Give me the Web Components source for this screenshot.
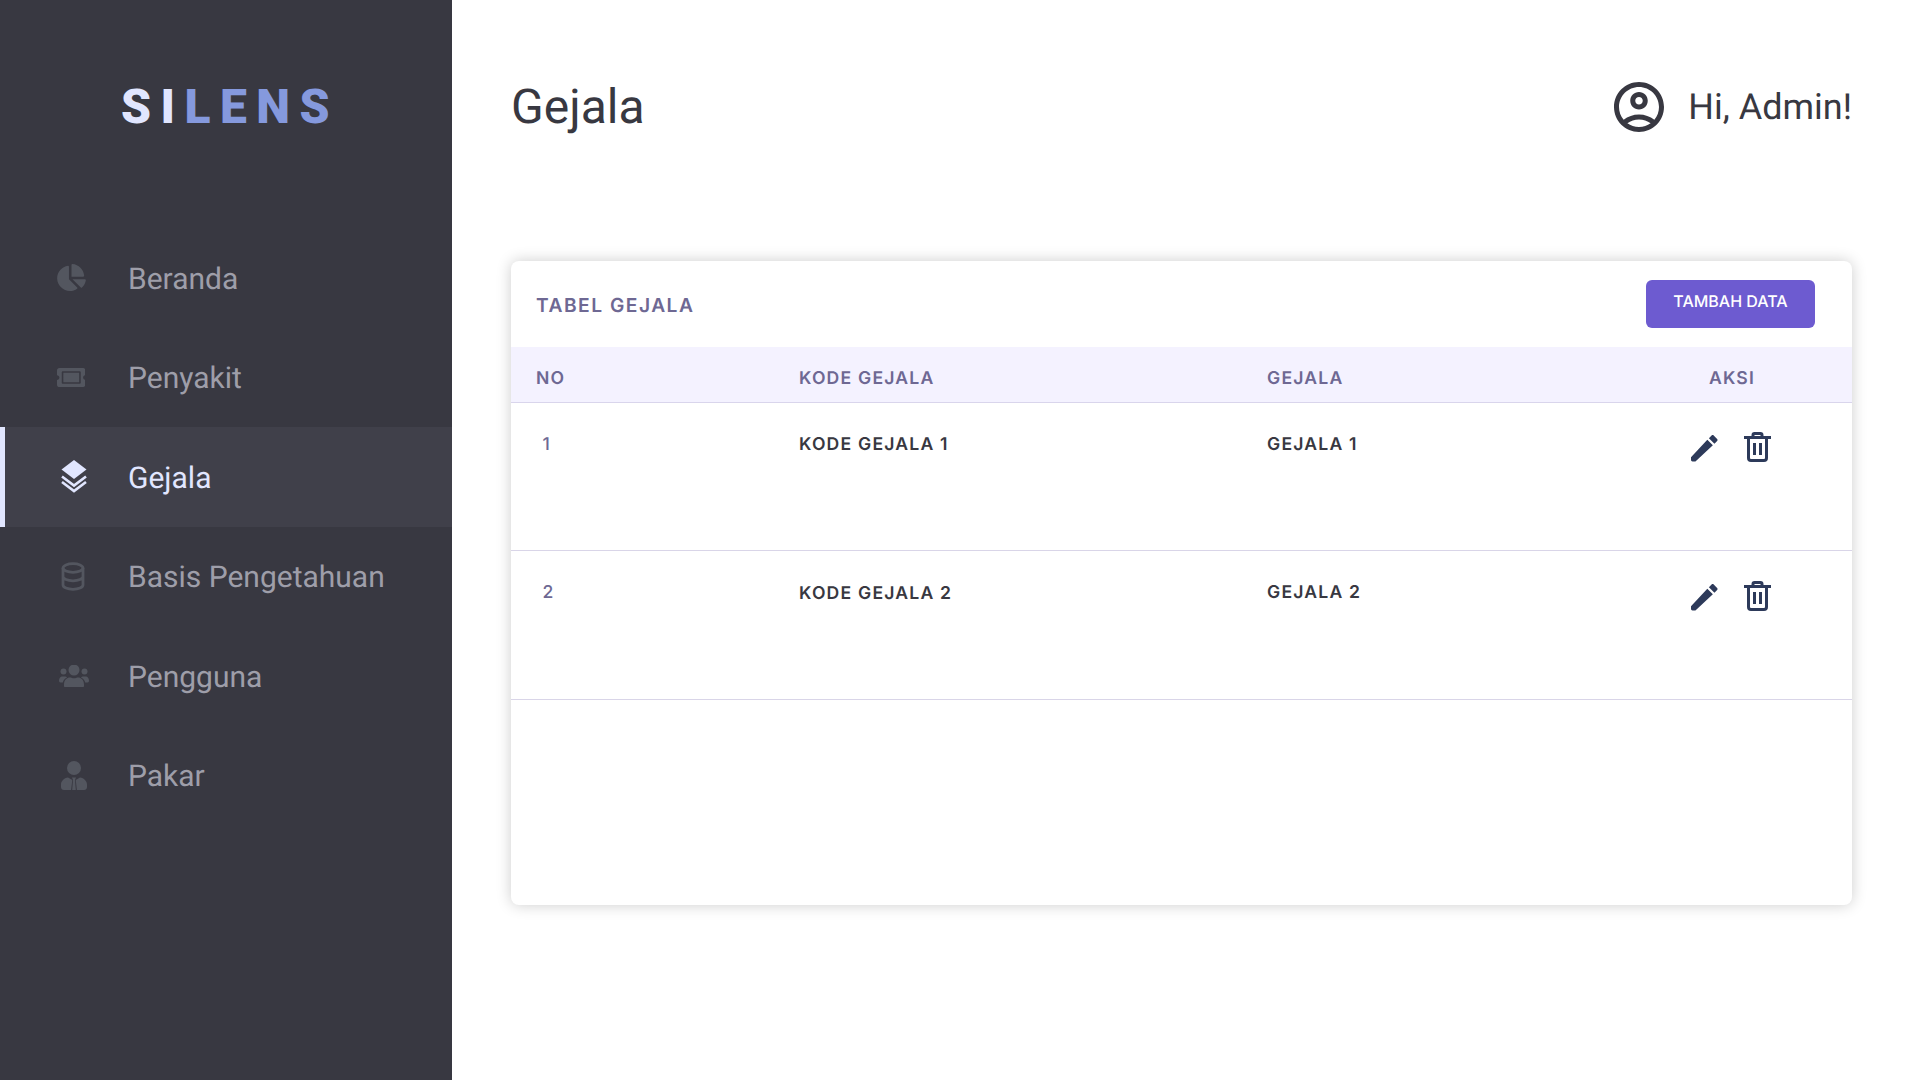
<!DOCTYPE html>
<html lang="id">
<head>
<meta charset="utf-8">
<title>Gejala</title>
<style>
html,body{margin:0;height:100%;background:#fff}
body{font-family:Roboto,sans-serif;text-rendering:geometricPrecision}
</style>
</head>
<body>
<app-shell>
  <side-bar slot="side">
    <nav-item label="Beranda" icon="pie"></nav-item>
    <nav-item label="Penyakit" icon="ticket"></nav-item>
    <nav-item label="Gejala" icon="layers" active></nav-item>
    <nav-item label="Basis Pengetahuan" icon="db"></nav-item>
    <nav-item label="Pengguna" icon="users"></nav-item>
    <nav-item label="Pakar" icon="tie"></nav-item>
  </side-bar>
  <top-bar title-text="Gejala" user="Hi, Admin!"></top-bar>
  <data-card heading="TABEL GEJALA" action="TAMBAH DATA">
    <data-row no="1" code="KODE GEJALA 1" name="GEJALA 1" style="height:148px"></data-row>
    <data-row no="2" code="KODE GEJALA 2" name="GEJALA 2" style="--code-top:1px;--icon-top:-1px"></data-row>
  </data-card>
</app-shell>
<script>
const ICONS={
pie:'<svg style="margin-left:-6px" viewBox="0 0 544 512" width="29" height="27"><path fill="currentColor" d="M527.79 288H290.5l158.03 158.03c6.04 6.04 15.98 6.53 22.19.68 38.7-36.46 65.32-85.61 73.13-140.86 1.34-9.46-6.51-17.85-16.06-17.85zm-15.83-64.8C503.72 103.74 408.26 8.28 288.8.04 279.68-.59 272 7.1 272 16.24V240h223.77c9.14 0 16.82-7.68 16.19-16.8zM224 288V50.71c0-9.55-8.39-17.4-17.84-16.06C86.99 51.49-4.1 155.6.14 280.37 4.5 408.51 114.83 513.59 243.03 511.98c50.4-.63 96.97-16.87 135.26-44.03 7.9-5.6 8.42-17.23 1.57-24.08L224 288z"/></svg>',
ticket:'<svg style="margin-left:-6px" viewBox="0 64 576 384" width="28.500" height="19"><path fill="currentColor" fill-rule="evenodd" d="M128 160h320v192H128V160zm400 96c0 26.51 21.49 48 48 48v96c0 26.51-21.49 48-48 48H48c-26.51 0-48-21.49-48-48v-96c26.51 0 48-21.49 48-48s-21.49-48-48-48v-96c0-26.51 21.49-48 48-48h480c26.51 0 48 21.49 48 48v96c-26.51 0-48 21.49-48 48zm-48-104c0-13.255-10.745-24-24-24H120c-13.255 0-24 10.745-24 24v208c0 13.255 10.745 24 24 24h336c13.255 0 24-10.745 24-24V152z"/></svg>',
layers:'<svg viewBox="0 0 26 33" width="26" height="33"><path fill="currentColor" d="M13 0 25.500 9.500 13 19 .5 9.500z"/><path fill="none" stroke="currentColor" stroke-width="2.600" stroke-linejoin="miter" d="M1 16.500 13 25.500 25 16.500M1 22 13 31 25 22"/></svg>',
db:'<svg style="margin-left:-3px" viewBox="0 0 24 29" width="24" height="29"><g fill="none" stroke="currentColor" stroke-width="2.800"><ellipse cx="12" cy="6" rx="10" ry="4.300"/><path d="M2 6v17c0 2.400 4.500 4.300 10 4.300S22 25.400 22 23V6M2 14.500c0 2.400 4.500 4.300 10 4.300s10-1.900 10-4.300"/></g></svg>',
users:'<svg viewBox="0 0 30 22" width="30" height="22"><g fill="currentColor"><circle cx="15" cy="5" r="5.500"/><circle cx="4.500" cy="6.500" r="3"/><circle cx="25.500" cy="6.500" r="3"/><path d="M6 22c-.6 0-1-.4-1-1v-1.500C5 15 8 12.500 11 12.500c1.300 0 2.600.8 4 .8s2.700-.8 4-.8c3 0 6 2.500 6 7V21c0 .6-.4 1-1 1z"/><path d="M0 15.500c0-2 1.500-4 3-4h3c.5 0 1.500.3 2 1-2.500 1-3.800 3-4.200 5H1.500C.5 17.500 0 16.800 0 15.500zM30 15.500c0-2-1.500-4-3-4h-3c-.5 0-1.500.3-2 1 2.500 1 3.800 3 4.200 5h2.300c1 0 1.500-.7 1.500-2z"/></g></svg>',
tie:'<svg viewBox="0 0 26 29" width="26" height="29"><g fill="currentColor"><circle cx="13" cy="7" r="7"/><path fill-rule="evenodd" d="M7 16.500 11.300 19l-1.200 10H3c-1.700 0-3-1.300-3-3v-2.500c0-3.300 3-6.500 7-7zM19 16.500c4 .5 7 3.700 7 7V26c0 1.700-1.300 3-3 3h-7.100l-1.200-10zM11 16.500h4l-1 2.500.8 10h-3.600l.8-10z"/></g></svg>'
};
const define=(name,cls)=>customElements.define(name,cls);

define('app-shell',class extends HTMLElement{constructor(){super();this.attachShadow({mode:'open'}).innerHTML=`<style>
:host{display:flex;width:100%;height:1080px;overflow:hidden}
main{flex:1;min-width:0;padding:0 68px 0 59px;display:flex;flex-direction:column}
</style><slot name="side"></slot><main><slot></slot></main>`}});

define('side-bar',class extends HTMLElement{constructor(){super();this.attachShadow({mode:'open'}).innerHTML=`<style>
:host{display:block;flex:none;width:452px;height:1080px;background:#383841;font-family:Roboto,sans-serif}
.logo{height:212px;box-sizing:border-box;display:flex;justify-content:center;align-items:center;font-size:48px;font-weight:900;letter-spacing:9.500px;line-height:1;color:#e1e6ff;padding:2px 0 0 8px}
.logo b{font-weight:900;color:#8599dd}
nav{display:flex;flex-direction:column;padding-top:16px}
</style><div class="logo"><div>SI<b>LENS</b></div></div><nav><slot></slot></nav>`}});

define('nav-item',class extends HTMLElement{connectedCallback(){
if(this.shadowRoot)return;
this.attachShadow({mode:'open'}).innerHTML=`<style>
:host{display:flex;align-items:center;height:99.500px;box-sizing:border-box;color:#9e9ea9;font-size:30px;font-family:Roboto,sans-serif;padding-left:57px}
:host([active]){background:#40404a;border-left:5px solid #e1e6ff;padding-left:52px;color:#e1e6ff}
.i{width:34px;height:34px;display:flex;align-items:center;justify-content:center;color:#53565f;margin-right:37px;flex:none}
:host([active]) .i{color:#e1e6ff}
.l{padding-top:3px}
</style><span class="i">${ICONS[this.getAttribute('icon')]}</span><span class="l">${this.getAttribute('label')}</span>`}});

define('top-bar',class extends HTMLElement{connectedCallback(){
if(this.shadowRoot)return;
this.attachShadow({mode:'open'}).innerHTML=`<style>
:host{display:flex;justify-content:space-between;align-items:center;height:212px;padding-top:2px;box-sizing:border-box;flex:none;color:#383841;font-family:Roboto,sans-serif}
h1{margin:0;font-weight:400;font-size:48px;line-height:1}
.u{display:flex;align-items:center;gap:19px;font-size:36px;line-height:1}
svg{display:block;width:60px;height:60px}
</style><h1>${this.getAttribute('title-text')}</h1><div class="u"><svg viewBox="0 0 24 24"><path fill="currentColor" fill-rule="evenodd" d="M12 2C6.480 2 2 6.480 2 12s4.480 10 10 10 10-4.480 10-10S17.520 2 12 2zM7.350 18.500C8.660 17.560 10.260 17 12 17s3.340.560 4.650 1.500C15.340 19.440 13.740 20 12 20s-3.340-.560-4.650-1.500zm10.790-1.380C16.450 15.800 14.320 15 12 15s-4.450.8-6.140 2.120C4.700 15.730 4 13.950 4 12c0-4.420 3.580-8 8-8s8 3.580 8 8c0 1.950-.7 3.730-1.860 5.120zM12 6c-1.930 0-3.500 1.570-3.500 3.500S10.070 13 12 13s3.500-1.570 3.500-3.500S13.930 6 12 6zm0 5c-.83 0-1.500-.67-1.500-1.500S11.170 8 12 8s1.500.67 1.500 1.500S12.830 11 12 11z"/></svg><span>${this.getAttribute('user')}</span></div>`}});

define('data-card',class extends HTMLElement{connectedCallback(){
if(this.shadowRoot)return;
this.attachShadow({mode:'open'}).innerHTML=`<style>
:host{display:block;margin-top:49px;height:644px;box-sizing:border-box;background:#fff;border-radius:8px;box-shadow:0 0 15px rgba(0,0,0,.2);overflow:hidden;font-family:Inter,sans-serif;flex:none}
.h{display:flex;justify-content:space-between;align-items:center;height:86px;padding:0 37px 0 25px;box-sizing:border-box}
.t{font-size:19.200px;font-weight:600;letter-spacing:1.500px;color:#6e6893;padding-top:2px}
button{all:unset;box-sizing:border-box;width:169px;height:48px;background:#6d5bd0;border-radius:6px;color:#fff;font-size:16px;font-weight:500;text-align:center;padding-bottom:6px}
.th{display:grid;grid-template-columns:263px 468px 1fr 240px;height:56px;align-items:center;background:#f4f2ff;border-bottom:1px solid #d9d5ec;box-sizing:border-box;padding:7px 0 0 25px;font-size:17.600px;font-weight:600;letter-spacing:1.200px;color:#6e6893}
.a{text-align:center}
</style><div class="h"><span class="t">${this.getAttribute('heading')}</span><button>${this.getAttribute('action')}</button></div>
<div class="th"><span>NO</span><span>KODE GEJALA</span><span>GEJALA</span><span class="a">AKSI</span></div><slot></slot>`}});

define('data-row',class extends HTMLElement{connectedCallback(){
if(this.shadowRoot)return;
this.attachShadow({mode:'open'}).innerHTML=`<style>
:host{display:grid;grid-template-columns:263px 468px 1fr 240px;height:149px;box-sizing:border-box;border-bottom:1px solid #d9d5e8;padding-left:25px;padding-top:31px;font-size:17.600px;font-weight:600;letter-spacing:1.200px;color:#383841;font-family:Inter,sans-serif}
.n{color:#6e6893;padding-left:6.500px;font-weight:500}
.c{padding-top:var(--code-top,0)}
.a{display:flex;justify-content:center;align-items:flex-end;gap:26px;color:#2d3a5a;height:30px;margin-top:calc(-2px - var(--icon-top,0px));padding-right:3px}
svg{display:block}
</style><span class="n">${this.getAttribute('no')}</span><span class="c">${this.getAttribute('code')}</span><span>${this.getAttribute('name')}</span>
<span class="a"><svg viewBox="3 3 18.300 18.300" width="27" height="27"><path fill="currentColor" d="M3 18V20a1 1 0 0 0 1 1H6L17.810 9.940l-3.750-3.750zM20.710 7.040c.39-.39.39-1.020 0-1.410l-2.340-2.340c-.39-.39-1.020-.39-1.410 0l-1.830 1.830 3.750 3.750 1.830-1.830z"/></svg><svg viewBox="0 0 27 30" width="27" height="30"><g fill="none" stroke="currentColor" stroke-width="3"><path d="M0 5.500h27M9 5V3c0-.8.700-1.500 1.500-1.500h6c.8 0 1.500.7 1.500 1.500v2M4.500 5.500V26c0 1.400 1.100 2.500 2.500 2.500h13c1.400 0 2.500-1.100 2.500-2.500V5.500M10.500 11v12M16.500 11v12"/></g></svg></span>`}});
</script>
</body>
</html>
